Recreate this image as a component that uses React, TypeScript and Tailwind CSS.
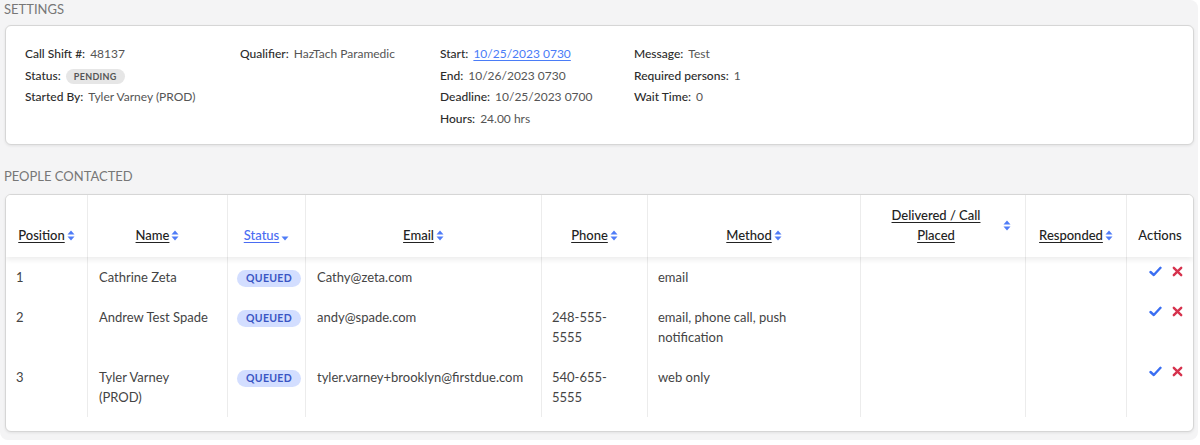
import React from "react";

const SortIcon = ({ mode = "both" }: { mode?: "both" | "down" }) => (
    <svg width="8" height="11" viewBox="0 0 8 11" className="shrink-0">
        {mode === "both" && <path d="M4 0.5 L7.5 4.5 L0.5 4.5 Z" fill="#4f7cf7" />}
        <path d="M0.5 6.5 L7.5 6.5 L4 10.5 Z" fill="#4f7cf7" />
    </svg>
);

const CheckIcon = () => (
    <svg width="13" height="11" viewBox="0 0 13 11">
        <path d="M1.5 6 L4.8 9 L11.5 1.8" fill="none" stroke="#3a6ef2" strokeWidth="2.4" strokeLinecap="round" strokeLinejoin="round" />
    </svg>
);

const CrossIcon = () => (
    <svg width="11" height="11" viewBox="0 0 11 11">
        <path d="M1.8 1.8 L9.2 9.2 M9.2 1.8 L1.8 9.2" fill="none" stroke="#d6334e" strokeWidth="2.4" strokeLinecap="round" />
    </svg>
);

const Field = ({ label, children }: { label: string; children: React.ReactNode }) => (
    <div className="flex items-center whitespace-nowrap">
        <span className="font-medium text-[#2b2b2b]">{label}</span>
        <span className="ml-[5px] text-[#555]">{children}</span>
    </div>
);

const Badge = ({ text }: { text: string }) => (
    <span className="inline-flex h-[17px] items-center rounded-full bg-[#d3deff] px-[9px] text-[10.5px] font-bold tracking-[0.3px] text-[#3a55c4]">
        {text}
    </span>
);

const cols = "grid grid-cols-[82px_140px_78px_236px_106px_213px_165px_101px_66px]";

const people = [
    { pos: "1", name: "Cathrine Zeta", email: "Cathy@zeta.com", phone: "", method: "email" },
    { pos: "2", name: "Andrew Test Spade", email: "andy@spade.com", phone: "248-555-5555", method: "email, phone call, push notification" },
    { pos: "3", name: "Tyler Varney (PROD)", email: "tyler.varney+brooklyn@firstdue.com", phone: "540-655-5555", method: "web only" },
];

const HeadCell = ({ label, last, active, mode }: { label: string; last?: boolean; active?: boolean; mode?: "both" | "down" }) => (
    <div className={`flex h-[62px] flex-col justify-end pb-[12px] ${last ? "" : "border-r border-r-[#ececec]"}`}>
        <div className="flex items-center justify-center gap-[2px] leading-5">
            <span className={`font-medium underline underline-offset-2 ${active ? "text-[#4a6cf2]" : "text-[#222]"}`}>{label}</span>
            <SortIcon mode={mode} />
        </div>
    </div>
);

const App = () => {
    return (
        <div className="h-[445px] w-[1200px] bg-white" style={{ fontFamily: "Lato, 'Noto Sans', sans-serif" }}>
            <div className="h-[440px] w-[1198px] rounded-tr-lg rounded-b-lg bg-[#f4f4f5]">
                {/* Settings section */}
                <div className="pl-[4px] text-[13px] uppercase leading-[18px] text-[#777]">Settings</div>
                <div className="mx-[5px] mt-[7px] h-[120px] w-[1189px] rounded-md border border-[#d6d6d6] bg-white pl-[19px] pt-[17px] text-[12px] leading-[21.5px] shadow-[0_1px_3px_rgba(0,0,0,0.08)]">
                    <div className="grid grid-cols-[215px_200px_194px_1fr]">
                        <div>
                            <Field label="Call Shift #:">48137</Field>
                            <Field label="Status:">
                                <span className="inline-flex h-[15px] items-center rounded-full bg-[#e6e6e6] px-[8px] text-[9px] font-bold tracking-[0.3px] text-[#555]">PENDING</span>
                            </Field>
                            <Field label="Started By:">Tyler Varney (PROD)</Field>
                        </div>
                        <div>
                            <Field label="Qualifier:">HazTach Paramedic</Field>
                        </div>
                        <div>
                            <Field label="Start:">
                                <span className="text-[#4a7cf7] underline underline-offset-2">10/25/2023 0730</span>
                            </Field>
                            <Field label="End:">10/26/2023 0730</Field>
                            <Field label="Deadline:">10/25/2023 0700</Field>
                            <Field label="Hours:">24.00 hrs</Field>
                        </div>
                        <div>
                            <Field label="Message:">Test</Field>
                            <Field label="Required persons:">1</Field>
                            <Field label="Wait Time:">0</Field>
                        </div>
                    </div>
                </div>

                {/* People contacted section */}
                <div className="mt-[22px] pl-[4px] text-[13px] uppercase leading-[18px] text-[#777]">People Contacted</div>
                <div className="mx-[5px] mt-[9px] w-[1189px] overflow-hidden rounded-md border border-[#d6d6d6] bg-white pb-[14px] text-[13px] shadow-[0_1px_3px_rgba(0,0,0,0.08)]">
                    <div className={`${cols} relative z-10 bg-white shadow-[0_3px_5px_rgba(0,0,0,0.07)]`}>
                        <HeadCell label="Position" />
                        <HeadCell label="Name" />
                        <HeadCell label="Status" active mode="down" />
                        <HeadCell label="Email" />
                        <HeadCell label="Phone" />
                        <HeadCell label="Method" />
                        <div className="flex h-[62px] flex-col justify-end border-r border-r-[#ececec] pb-[12px]">
                            <div className="flex items-center justify-center gap-[6px] leading-5">
                                <span className="w-[122px] text-center font-medium text-[#222] underline underline-offset-2">
                                    Delivered / Call
                                    <br />
                                    Placed
                                </span>
                                <SortIcon />
                            </div>
                        </div>
                        <HeadCell label="Responded" />
                        <div className="flex h-[62px] flex-col justify-end pb-[12px]">
                            <div className="text-center font-medium leading-5 text-[#222]">Actions</div>
                        </div>
                    </div>
                    <div className={cols}>
                        {people.map((p) => (
                            <React.Fragment key={p.pos}>
                                <div className="border-r border-r-[#ececec] px-[10px] py-[10px] leading-5 text-[#444]">{p.pos}</div>
                                <div className="border-r border-r-[#ececec] pl-[11px] pr-[18px] py-[10px] leading-5 text-[#444]">{p.name}</div>
                                <div className="border-r border-r-[#ececec] px-[9px] pt-[10px] leading-5">
                                    <Badge text="QUEUED" />
                                </div>
                                <div className="border-r border-r-[#ececec] px-[11px] py-[10px] leading-5 text-[#444]">{p.email}</div>
                                <div className="border-r border-r-[#ececec] px-[10px] py-[10px] leading-5 text-[#444]">{p.phone}</div>
                                <div className="border-r border-r-[#ececec] px-[10px] py-[10px] leading-5 text-[#444]">{p.method}</div>
                                <div className="border-r border-r-[#ececec]" />
                                <div className="border-r border-r-[#ececec]" />
                                <div className="flex justify-end gap-[10px] pr-[10px] pt-[9px]">
                                    <CheckIcon />
                                    <CrossIcon />
                                </div>
                            </React.Fragment>
                        ))}
                    </div>
                </div>
            </div>
        </div>
    );
};

export default App;
